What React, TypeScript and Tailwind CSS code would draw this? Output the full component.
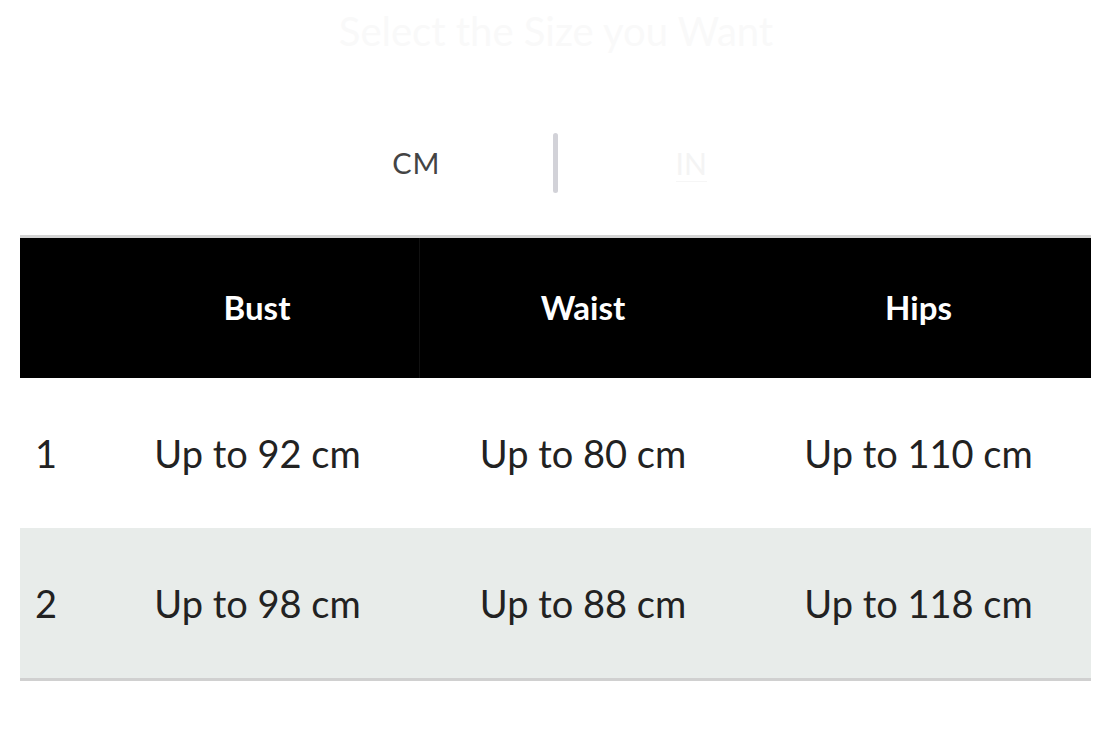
import React from "react";

const rows = [
  { n: "1", bust: "Up to 92 cm", waist: "Up to 80 cm", hips: "Up to 110 cm" },
  { n: "2", bust: "Up to 98 cm", waist: "Up to 88 cm", hips: "Up to 118 cm" },
];

export default function App() {
  return (
    <div
      className="w-[1112px] h-[736px] bg-white overflow-hidden"
      style={{ fontFamily: "Lato, 'Open Sans', sans-serif" }}
    >
      <div className="h-[62px] flex items-center justify-center">
        <h1 className="text-[40px] text-[#f9f9f9] leading-none">Select the Size you Want</h1>
      </div>
      <div className="h-[173px] flex items-center justify-center pt-[28px]">
        <div className="flex items-center">
          <div className="w-[104px] text-right text-[29px] text-[#444] tracking-[1px] leading-none mr-[112px]">
            CM
          </div>
          <div className="w-[5px] h-[60px] rounded-full bg-[#d2d2d8]" />
          <div className="ml-[118px] w-[100px] text-left text-[30px] text-[#f4f4f4] leading-none">
            <span className="border-b border-[#f6f6f6]">IN</span>
          </div>
        </div>
      </div>
      <div className="mx-[20px] w-[1071px]">
        <div className="h-[3px] bg-[#d4d4d4]" />
        <div className="flex h-[140px] bg-black text-white font-bold text-[33px]">
          <div className="w-[75px]" />
          <div className="w-[325px] flex items-center justify-center border-r border-[#111]">Bust</div>
          <div className="w-[326px] flex items-center justify-center">Waist</div>
          <div className="flex-1 flex items-center justify-center">Hips</div>
        </div>
        {rows.map((r, i) => (
          <div
            key={r.n}
            className={`flex items-center h-[150px] text-[38px] text-[#222] ${i === 1 ? "bg-[#e8ecea]" : "bg-white"}`}
          >
            <div className="w-[75px] pl-[15px]">{r.n}</div>
            <div className="w-[325px] text-center">{r.bust}</div>
            <div className="w-[326px] text-center">{r.waist}</div>
            <div className="flex-1 text-center">{r.hips}</div>
          </div>
        ))}
        <div className="h-[3px] bg-[#d0d0d0]" />
      </div>
    </div>
  );
}
